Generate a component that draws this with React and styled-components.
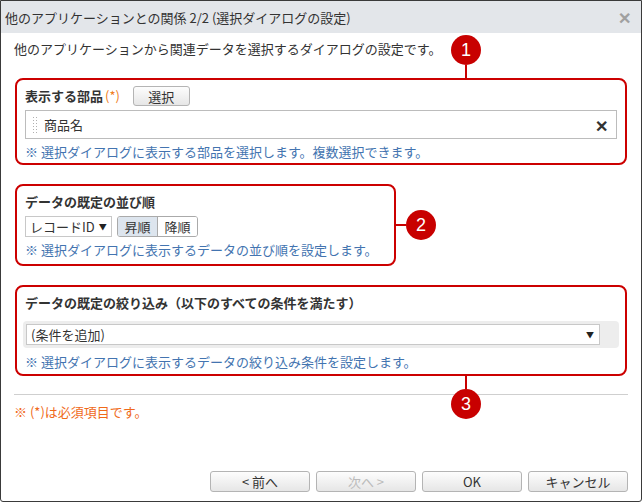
import styled, { createGlobalStyle } from 'styled-components';

const GlobalStyle = createGlobalStyle`
  html, body {
    margin: 0;
    padding: 0;
    background: #fff;
  }
  body {
    font-family: "Noto Sans CJK JP", "Noto Sans", sans-serif;
    font-size: 13px;
    color: #333;
  }
`;

const Dialog = styled.div`
  width: 642px;
  height: 502px;
  box-sizing: border-box;
  border: 1px solid #3a3a3a;
  border-radius: 0 0 3px 3px;
  display: flex;
  flex-direction: column;
  background: #fff;
  overflow: hidden;
`;

const TitleBar = styled.div`
  height: 32px;
  flex: none;
  background: #e3e6ea;
  display: flex;
  align-items: center;
  justify-content: space-between;
  padding: 0 10px 0 4px;
  font-size: 13px;
  color: #333;
`;

const Close = styled.span`
  color: #a0a0a0;
  font-size: 16px;
  font-weight: bold;
  line-height: 1;
`;

const Body = styled.div`
  flex: 1;
  display: flex;
  flex-direction: column;
  padding: 0 13px 9px 13px;
`;

const Intro = styled.div`
  margin-top: 7px;
  line-height: 18px;
`;

const Box = styled.div`
  position: relative;
  margin-top: ${p => p.$top}px;
  margin-left: 1px;
  width: ${p => p.$width};
  box-sizing: border-box;
  border: 2px solid #cc0000;
  border-radius: 8px;
  padding: ${p => p.$pad};
`;

const LabelRow = styled.div`
  display: flex;
  align-items: center;
  height: 20px;
`;

const Label = styled.span`
  font-weight: bold;
  line-height: 18px;
`;

const Req = styled.span`
  color: #f07d1c;
  font-weight: normal;
  margin-left: 2px;
`;

const Button = styled.button`
  font-family: inherit;
  font-size: 13px;
  color: ${p => (p.disabled ? '#bbb' : '#333')};
  height: ${p => p.$h || 21}px;
  width: ${p => p.$w}px;
  margin-left: ${p => p.$ml || 0}px;
  padding: 0;
  border: 1px solid #b4b4b4;
  border-radius: 3px;
  background: linear-gradient(#fdfdfd, #e6e6e6);
  line-height: 1;
`;

const FieldBox = styled.div`
  margin-top: 4px;
  height: 29px;
  box-sizing: border-box;
  border: 1px solid #bcbcbc;
  display: flex;
  align-items: center;
  padding: 0 8px 0 6px;
  gap: 7px;
`;

const Grip = styled.span`
  width: 5px;
  height: 18px;
  background-image: radial-gradient(circle, #b0b0b0 0.9px, transparent 1px);
  background-size: 3px 3px;
  flex: none;
`;

const FieldText = styled.span`
  flex: 1;
`;

const Remove = styled.span`
  font-weight: bold;
  font-size: 16px;
  color: #333;
`;

const Hint = styled.div`
  color: #4374b0;
  line-height: 20px;
  margin-top: ${p => p.$top || 3}px;
`;

const Controls = styled.div`
  display: flex;
  gap: 5px;
  margin-top: 5px;
`;

const Select = styled.div`
  box-sizing: border-box;
  height: 21px;
  width: ${p => p.$w};
  flex: none;
  border: 1px solid #c8c8c8;
  background: #fff;
  display: flex;
  align-items: center;
  justify-content: space-between;
  gap: 4px;
  padding: 0 5px 0 4px;
  font-size: 13px;
  white-space: nowrap;
`;

const Arrow = styled.span`
  font-size: 8px;
  color: #222;
`;

const Segmented = styled.div`
  display: flex;
  border: 1px solid #aaa;
  border-radius: 3px;
  overflow: hidden;
  height: 21px;
  box-sizing: border-box;
`;

const Seg = styled.span`
  width: 39px;
  display: flex;
  align-items: center;
  justify-content: center;
  background: ${p => (p.$on ? '#dde5ee' : '#fff')};
  border-left: ${p => (p.$first ? 'none' : '1px solid #aaa')};
`;

const FilterWrap = styled.div`
  margin: 9px -2px 0 -2px;
  background: #ededed;
  border-radius: 4px;
  padding: 3px 19px 3px 3px;
`;

const Callout = styled.div`
  position: absolute;
  display: flex;
  align-items: center;
  flex-direction: ${p => p.$dir};
  ${p => p.$place}
`;

const Badge = styled.span`
  width: 30px;
  height: 30px;
  border-radius: 50%;
  background: #c80000;
  color: #fff;
  font-family: "Liberation Sans", sans-serif;
  font-size: 18px;
  display: flex;
  align-items: center;
  justify-content: center;
  flex: none;
`;

const Stem = styled.span`
  background: #c80000;
  width: ${p => (p.$horiz ? '12px' : '2px')};
  height: ${p => (p.$horiz ? '2px' : '15px')};
`;

const Rule = styled.div`
  margin-top: 18px;
  border-top: 1px solid #cfcfcf;
`;

const Note = styled.div`
  margin-top: 8px;
  color: #f06a1a;
  line-height: 18px;
`;

const Footer = styled.div`
  margin-top: auto;
  display: flex;
  justify-content: flex-end;
  gap: 6px;
`;

export default function App() {
  return (
    <>
      <GlobalStyle />
      <Dialog>
        <TitleBar>
          <span>他のアプリケーションとの関係 2/2 (選択ダイアログの設定)</span>
          <Close>✕</Close>
        </TitleBar>
        <Body>
          <Intro>他のアプリケーションから関連データを選択するダイアログの設定です。</Intro>

          <Box $top={20} $width="612px" $pad="6px 8px 1px 8px">
            <Callout $dir="column" $place="bottom: 100%; left: 434px;">
              <Badge>1</Badge>
              <Stem />
            </Callout>
            <LabelRow>
              <Label>表示する部品<Req>(*)</Req></Label>
              <Button $w={57} $h={20} $ml={13}>選択</Button>
            </LabelRow>
            <FieldBox>
              <Grip />
              <FieldText>商品名</FieldText>
              <Remove>✕</Remove>
            </FieldBox>
            <Hint>※ 選択ダイアログに表示する部品を選択します。複数選択できます。</Hint>
          </Box>

          <Box $top={19} $width="381px" $pad="6px 8px 4px 8px">
            <Callout $dir="row" $place="left: 100%; top: 50%; transform: translateY(-50%);">
              <Stem $horiz />
              <Badge>2</Badge>
            </Callout>
            <Label>データの既定の並び順</Label>
            <Controls>
              <Select $w="87px">
                <span>レコードID</span>
                <Arrow>▼</Arrow>
              </Select>
              <Segmented>
                <Seg $on $first>昇順</Seg>
                <Seg>降順</Seg>
              </Segmented>
            </Controls>
            <Hint $top={3}>※ 選択ダイアログに表示するデータの並び順を設定します。</Hint>
          </Box>

          <Box $top={19} $width="612px" $pad="6px 8px 2px 8px">
            <Callout $dir="column" $place="top: 100%; left: 434px;">
              <Stem />
              <Badge>3</Badge>
            </Callout>
            <Label>データの既定の絞り込み（以下のすべての条件を満たす）</Label>
            <FilterWrap>
              <Select $w="100%">
                <span>(条件を追加)</span>
                <Arrow>▼</Arrow>
              </Select>
            </FilterWrap>
            <Hint $top={4}>※ 選択ダイアログに表示するデータの絞り込み条件を設定します。</Hint>
          </Box>

          <Rule />
          <Note>※ (*)は必須項目です。</Note>

          <Footer>
            <Button $w={100}>&lt; 前へ</Button>
            <Button $w={100} disabled>次へ &gt;</Button>
            <Button $w={100}>OK</Button>
            <Button $w={100}>キャンセル</Button>
          </Footer>
        </Body>
      </Dialog>
    </>
  );
}
